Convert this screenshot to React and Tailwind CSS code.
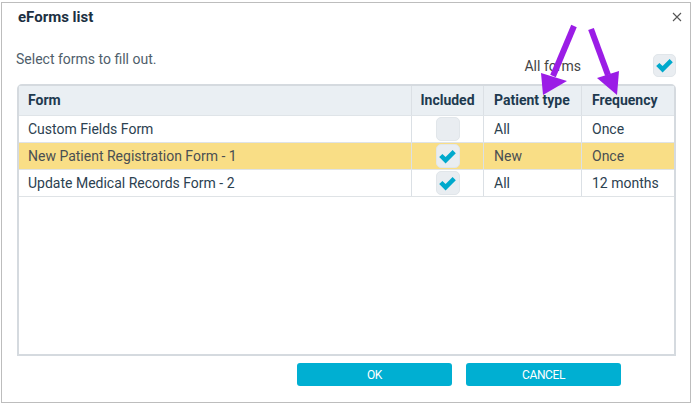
import React from "react";

const rows = [
  { name: "Custom Fields Form", included: false, type: "All", freq: "Once" },
  { name: "New Patient Registration Form - 1", included: true, type: "New", freq: "Once", active: true },
  { name: "Update Medical Records Form - 2", included: true, type: "All", freq: "12 months" },
];

const Check = ({ size = 16 }) => (
  <svg width={size} height={size} viewBox="0 0 16 16">
    <path d="M1 8.4 L3.7 5.8 L6.4 8.5 L12.3 2.5 L15 5.2 L6.4 13.8 Z" fill="#00a9cc" />
  </svg>
);

const Box = ({ checked, size }) => (
  <div
    className={`flex items-center justify-center rounded-[5px] bg-[#e9edf1] border border-[#e1e6ea] ${
      size === "lg" ? "w-[24px] h-[24px]" : "w-[23px] h-[23px]"
    }`}
  >
    {checked && <Check size={19} />}
  </div>
);

export default function App() {
  return (
    <div className="relative w-[693px] h-[404px] bg-white font-['Roboto',sans-serif]">
      <div className="ml-[1px] mt-[2px] w-[690px] h-[401px] border border-[#bdbdbd] flex flex-col">
        <div className="h-[28px] flex items-center justify-between pl-[16px] pr-[8px]">
          <span className="text-[15px] font-bold text-[#1c3042]">eForms list</span>
          <svg width="10" height="10" viewBox="0 0 10 10">
            <path d="M1 1 L9 9 M9 1 L1 9" stroke="#555" strokeWidth="1.1" />
          </svg>
        </div>

        <div className="h-[53px] flex justify-between pl-[14px] pr-[14px]">
          <span className="mt-[20px] text-[14px] leading-[16px] text-[#4f5e6b] h-fit">
            Select forms to fill out.
          </span>
          <div className="mt-[23px] flex items-center h-fit">
            <span className="text-[14px] text-[#444] mr-[72px] mt-[2px]">All forms</span>
            <Box checked />
          </div>
        </div>

        <div className="ml-[15px] w-[659px] h-[272px] border-2 border-[#d5dadf] rounded-t-[5px] flex flex-col text-[14px]">
          <div className="h-[30px] flex bg-[#eaeff3] font-bold text-[#1e3a4f] border-b border-[#dfe4e8]">
            <div className="w-[392px] pl-[9px] flex items-center">Form</div>
            <div className="w-[72px] flex items-center justify-center border-l border-[#dbe0e5]">Included</div>
            <div className="w-[98px] pl-[10px] flex items-center border-l border-[#dbe0e5]">Patient type</div>
            <div className="w-[93px] pl-[10px] flex items-center border-l border-[#dbe0e5]">Frequency</div>
          </div>
          {rows.map((r) => (
            <div
              key={r.name}
              className={`h-[27px] flex border-b border-[#dfe3e6] ${
                r.active ? "bg-[#f9de86] text-[#4a4f52]" : "bg-white text-[#2c4150]"
              }`}
            >
              <div className="w-[392px] pl-[9px] flex items-center">{r.name}</div>
              <div className="w-[72px] flex items-center justify-center border-l border-[#dbe0e5]">
                <Box checked={r.included} size="lg" />
              </div>
              <div className="w-[98px] pl-[10px] flex items-center border-l border-[#dbe0e5]">{r.type}</div>
              <div className="w-[93px] pl-[10px] flex items-center border-l border-[#dbe0e5]">{r.freq}</div>
            </div>
          ))}
        </div>

        <div className="mt-[7px] flex gap-[14px] pl-[295px]">
          <button className="w-[155px] h-[23px] rounded-[3px] bg-[#00afd2] text-white text-[12px] tracking-[-0.4px]">
            OK
          </button>
          <button className="w-[155px] h-[23px] rounded-[3px] bg-[#00afd2] text-white text-[12px] tracking-[-0.4px]">
            CANCEL
          </button>
        </div>
      </div>

      <svg className="absolute left-0 top-0 pointer-events-none" width="693" height="404">
        <line x1="574" y1="24" x2="553" y2="74" stroke="#9b1de6" strokeWidth="6" />
        <polygon points="541,71 567,79 543,93" fill="#9b1de6" />
        <line x1="591" y1="27" x2="608" y2="73" stroke="#9b1de6" strokeWidth="6" />
        <polygon points="597,76 619,69 617,93" fill="#9b1de6" />
      </svg>
    </div>
  );
}
